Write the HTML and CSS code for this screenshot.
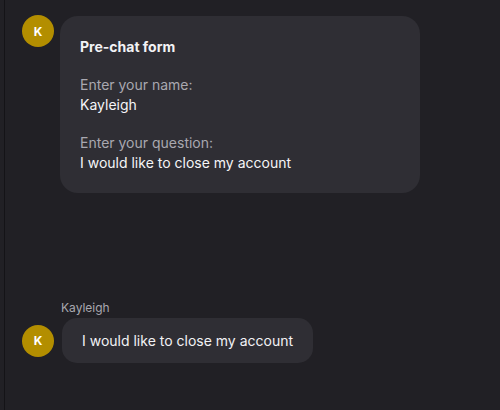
FILE: index.html
```html
<!DOCTYPE html>
<html>
<head>
<meta charset="utf-8">
<link rel="stylesheet" href="styles.css">
</head>
<body>
<div class="app">
  <div class="rail"></div>
  <div class="chat">
    <div class="msg first">
      <div class="avatar">K</div>
      <div class="bubble form">
        <div class="title">Pre-chat form</div>
        <div class="field">
          <div class="label">Enter your name:</div>
          <div class="value">Kayleigh</div>
        </div>
        <div class="field">
          <div class="label">Enter your question:</div>
          <div class="value">I would like to close my account</div>
        </div>
      </div>
    </div>
    <div class="group">
      <div class="sender">Kayleigh</div>
      <div class="msg">
        <div class="avatar">K</div>
        <div class="bubble text">I would like to close my account</div>
      </div>
    </div>
  </div>
</div>
</body>
</html>
```
FILE: styles.css
```css
html, body { margin: 0; padding: 0; }
body {
  background: #212025;
  font-family: Inter, "Noto Sans", sans-serif;
  color: #f2f2f4;
  width: 500px;
  height: 410px;
  overflow: hidden;
}
.app { display: flex; height: 410px; }
.rail { width: 4px; border-right: 1px solid #141317; flex: none; }
.chat { flex: 1; padding: 16px 0 0 17px; display: flex; flex-direction: column; }
.msg { display: flex; align-items: flex-start; }
.avatar {
  width: 32px; height: 32px; border-radius: 50%;
  background: #b38e00; color: #fff;
  font-size: 12px; font-weight: 700;
  display: flex; align-items: center; justify-content: center;
  flex: none; margin-top: -1px;
}
.bubble { background: #2f2e34; border-radius: 16px; }
.form { margin-left: 6px; width: 360px; height: 177px; padding: 20px 20px 0 20px; box-sizing: border-box; border-radius: 18px; }
.title { font-size: 14px; font-weight: 700; line-height: 20px; margin-top: 1px; }
.field { margin-top: 18px; }
.field + .field { margin-top: 18px; }
.label { font-size: 14px; color: #a9a8b0; line-height: 20px; }
.value { font-size: 14px; line-height: 20px; color: #f5f5f7; }
.group { margin-top: 107px; }
.sender { font-size: 12px; color: #a9a8b0; margin-left: 39px; line-height: 16px; }
.group .msg { margin-top: 2px; align-items: center; }
.group .avatar { margin-top: 0; }
.text { margin-left: 8px; padding: 13px 20px 13px 20px; font-size: 14px; line-height: 19px; border-radius: 15px; }
```
